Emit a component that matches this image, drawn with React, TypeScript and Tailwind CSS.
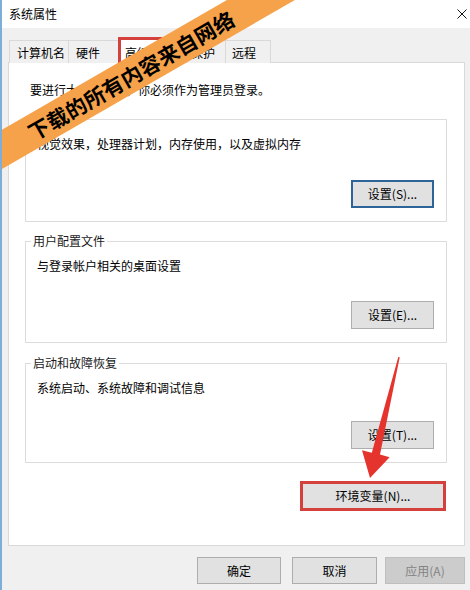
import React from "react";

const btn =
  "flex items-center justify-center bg-[#e1e1e1] border border-[#adadad] text-[12px] leading-[16px] text-black";

function GroupBox({
  label,
  text,
  btnText,
  h,
  mt,
  focused,
}: {
  label: string;
  text: string;
  btnText: string;
  h: string;
  mt: string;
  focused?: boolean;
}) {
  return (
    <div className={`relative ml-[16px] w-[422px] ${h} ${mt} border border-[#dcdcdc] flex flex-col`}>
      <div className="absolute -top-[9px] left-[5px] bg-white px-[2px] leading-[16px] text-[12px] text-[#1a1a1a]">
        {label}
      </div>
      <div className="pt-[16px] pl-[11px] leading-[16px] text-[12px]">{text}</div>
      <div
        className={`mt-auto self-end mr-[12px] mb-[13px] w-[83px] h-[28px] ${
          focused
            ? "flex items-center justify-center bg-[#e1e1e1] border-2 border-[#2e6599] text-[12px] leading-[16px] text-black"
            : btn
        }`}
      >
        {btnText}
      </div>
    </div>
  );
}

export default function App() {
  return (
    <div className="relative w-[470px] h-[590px] overflow-hidden bg-[#f0f0f0] border-l-2 border-[#7eaed8] text-black font-['Noto_Sans_CJK_SC',sans-serif] text-[12px]">
      {/* title bar */}
      <div className="h-[28px] bg-white flex items-center justify-between pl-[7px] pr-[3px]">
        <span className="text-[12px] leading-[16px]">系统属性</span>
        <svg width="10" height="10" viewBox="0 0 10 10">
          <path d="M0.5 0.5 L9.5 9.5 M9.5 0.5 L0.5 9.5" stroke="#111" strokeWidth="1" />
        </svg>
      </div>

      {/* tabs */}
      <div className="flex items-end pt-[9px] pl-[7px]">
        <div className="h-[23px] w-[60px] border border-b-0 border-[#d9d9d9] bg-[#f0f0f0] pl-[7px] pt-[4px] leading-[16px]">
          计算机名
        </div>
        <div className="h-[23px] w-[51px] border border-l-0 border-b-0 border-[#d9d9d9] bg-[#f0f0f0] pl-[7px] pt-[4px] leading-[16px]">
          硬件
        </div>
        <div className="relative z-10 h-[26px] w-[40px] border border-b-0 border-[#d9d9d9] bg-white pl-[4px] pt-[7px] leading-[16px]">
          高级
        </div>
        <div className="h-[23px] w-[66px] border border-l-0 border-b-0 border-[#d9d9d9] bg-[#f0f0f0] pl-[7px] pt-[4px] leading-[16px]">
          系统保护
        </div>
        <div className="h-[23px] w-[45px] border border-l-0 border-b-0 border-[#d9d9d9] bg-[#f0f0f0] pl-[6px] pt-[4px] leading-[16px]">
          远程
        </div>
      </div>

      {/* panel */}
      <div className="-mt-px ml-[6px] w-[457px] h-[484px] bg-white border border-[#d9d9d9] flex flex-col">
        <div className="pt-[19px] pl-[21px] leading-[16px]">要进行大多数更改，你必须作为管理员登录。</div>
        <GroupBox
          label="性能"
          text="视觉效果，处理器计划，内存使用，以及虚拟内存"
          btnText="设置(S)..."
          h="h-[103px]"
          mt="mt-[21px]"
          focused
        />
        <GroupBox
          label="用户配置文件"
          text="与登录帐户相关的桌面设置"
          btnText="设置(E)..."
          h="h-[102px]"
          mt="mt-[19px]"
        />
        <GroupBox
          label="启动和故障恢复"
          text="系统启动、系统故障和调试信息"
          btnText="设置(T)..."
          h="h-[100px]"
          mt="mt-[20px]"
        />
        <div className="mt-[18px] self-end mr-[18px] w-[146px] h-[30px] flex items-center justify-center bg-[#e1e1e1] border-[3px] border-[#d4413c] text-[12px] leading-[16px]">
          环境变量(N)...
        </div>
      </div>

      {/* bottom buttons */}
      <div className="mt-[11px] flex pl-[195px]">
        <div className={`${btn} w-[84px] h-[27px]`}>确定</div>
        <div className={`${btn} ml-[11px] w-[85px] h-[27px]`}>取消</div>
        <div className="ml-[8px] w-[80px] h-[27px] flex items-center justify-center bg-[#cccccc] border border-[#bfbfbf] text-[#838383] text-[12px] leading-[16px]">
          应用(A)
        </div>
      </div>

      {/* red highlight around selected tab */}
      <div className="absolute left-[116px] top-[37px] w-[44px] h-[28px] border-[3px] border-[#d4413c] z-20" />

      {/* banner */}
      <div className="absolute z-30 left-[-221px] top-[58px] w-[700px] h-[34px] rotate-[-30deg] bg-[#f6a24a] flex items-center justify-center">
        <span className="font-bold text-[21px] leading-none tracking-[0.3px] text-black">
          下载的所有内容来自网络
        </span>
      </div>

      {/* arrow */}
      <svg
        className="absolute z-30 left-[-2px] top-0 pointer-events-none"
        width="470"
        height="590"
        viewBox="0 0 470 590"
      >
        <polygon
          points="398.3,357 399.7,357.3 380,454.6 389.6,457.2 370,478 362,450.3 371.8,452.8"
          fill="#e5332e"
        />
      </svg>
    </div>
  );
}
